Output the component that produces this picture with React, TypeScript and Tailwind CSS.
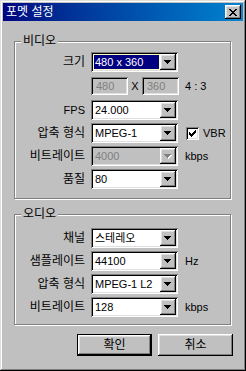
import type { ReactNode } from 'react';

const raised =
  'shadow-[inset_-1px_-1px_#000,inset_1px_1px_#fff,inset_-2px_-2px_#808080,inset_2px_2px_#dfdfdf]';
const sunken =
  'shadow-[inset_1px_1px_#808080,inset_-1px_-1px_#fff,inset_2px_2px_#000,inset_-2px_-2px_#dfdfdf]';

function Arrow({ disabled }: { disabled?: boolean }) {
  return (
    <svg width="8" height="5" viewBox="0 0 8 5" className="block">
      {disabled && <path d="M1 1h7v1H1zM2 2h5v1H2zM3 3h3v1H3zM4 4h1v1H4z" fill="#fff" />}
      <path d="M0 0h7v1H0zM1 1h5v1H1zM2 2h3v1H2zM3 3h1v1H3z" fill={disabled ? '#808080' : '#000'} />
    </svg>
  );
}

function Combo({ value, selected, disabled }: { value: string; selected?: boolean; disabled?: boolean }) {
  return (
    <div
      className={`flex h-[20px] w-[87px] items-center p-[2px] text-[11px] ${sunken} ${disabled ? 'bg-[#c0c0c0]' : 'bg-white'}`}
    >
      <div className="flex h-full flex-1 items-center overflow-hidden pl-[1px] pr-[1px]">
        {selected ? (
          <span className="flex h-[14px] w-full items-center bg-[#000080] pl-[1px] text-white outline outline-1 outline-dotted outline-[#ffff90]">
            {value}
          </span>
        ) : (
          <span className={`whitespace-nowrap pl-[1px] ${disabled ? 'text-[#808080]' : 'text-black'}`}>{value}</span>
        )}
      </div>
      <div className={`flex h-[16px] w-[16px] shrink-0 items-center justify-center bg-[#c0c0c0] ${raised}`}>
        <Arrow disabled={disabled} />
      </div>
    </div>
  );
}

function Row({ label, children, className = '' }: { label: string; children: ReactNode; className?: string }) {
  return (
    <div className={`flex h-[20px] items-center ${className}`}>
      <div className="w-[70px] text-right">{label}</div>
      <div className="ml-[6px] flex items-center">{children}</div>
    </div>
  );
}

function Group({ title, className, children }: { title: string; className: string; children: ReactNode }) {
  return (
    <div
      className={`relative w-[217px] border border-[#808080] shadow-[1px_1px_0_#fff,inset_1px_1px_0_#fff] ${className}`}
    >
      <span className="absolute -top-[8px] left-[6px] bg-[#c0c0c0] px-[2px] leading-[14px]">{title}</span>
      {children}
    </div>
  );
}

export default function App() {
  return (
    <div className="h-[371px] w-[246px] bg-[#c0c0c0] p-[3px] font-['Liberation_Sans','Noto_Sans_CJK_KR',sans-serif] text-[12px] leading-none text-black shadow-[inset_-1px_-1px_#000,inset_1px_1px_#dfdfdf,inset_-2px_-2px_#808080,inset_2px_2px_#fff]">
      <div className="flex h-[18px] items-center justify-between bg-gradient-to-r from-[#000080] to-[#1084d0] pl-[3px] pr-[2px]">
        <span className="text-white">포멧 설정</span>
        <div className={`flex h-[14px] w-[16px] items-center justify-center bg-[#c0c0c0] ${raised}`}>
          <svg width="8" height="7" viewBox="0 0 8 7" className="block">
            <path
              d="M0 0h2v1h1v1h2V1h1V0h2v1H7v1H6v1H5v1h1v1h1v1h1v1H6V6H5V5H3v1H2v1H0V6h1V5h1V4h1V3H2V2H1V1H0z"
              fill="#000"
            />
          </svg>
        </div>
      </div>

      <div className="pl-[11px]">
        <Group title="비디오" className="mt-[20px] h-[158px] pt-[10px]">
          <Row label="크기">
            <Combo value="480 x 360" selected />
          </Row>
          <div className="mt-[5px] flex h-[18px] items-center pl-[76px] text-[11px]">
            <div className={`flex h-[18px] w-[37px] items-center bg-[#c0c0c0] pl-[5px] text-[#808080] ${sunken}`}>480</div>
            <div className="w-[14px] text-center">X</div>
            <div className={`flex h-[18px] w-[37px] items-center bg-[#c0c0c0] pl-[5px] text-[#808080] ${sunken}`}>360</div>
            <span className="ml-[6px]">4 : 3</span>
          </div>
          <Row label="FPS" className="mt-[5px] text-[11px]">
            <Combo value="24.000" />
          </Row>
          <Row label="압축 형식" className="mt-[3px]">
            <Combo value="MPEG-1" />
            <div className={`ml-[8px] flex h-[13px] w-[13px] items-center justify-center bg-white ${sunken}`}>
              <svg width="7" height="7" viewBox="0 0 7 7" className="block">
                <path d="M6 0h1v3H6v1H5v1H4v1H3v1H2V6H1V5H0V2h1v1h1v1h1V3h1V2h1V1h1z" fill="#000" />
              </svg>
            </div>
            <span className="ml-[4px] text-[11px]">VBR</span>
          </Row>
          <Row label="비트레이트" className="mt-[3px]">
            <Combo value="4000" disabled />
            <span className="ml-[7px] text-[11px]">kbps</span>
          </Row>
          <Row label="품질" className="mt-[3px]">
            <Combo value="80" />
          </Row>
        </Group>

        <Group title="오디오" className="mt-[15px] h-[111px] pt-[13px]">
          <Row label="채널">
            <Combo value="스테레오" />
          </Row>
          <Row label="샘플레이트" className="mt-[3px]">
            <Combo value="44100" />
            <span className="ml-[7px] text-[11px]">Hz</span>
          </Row>
          <Row label="압축 형식" className="mt-[3px]">
            <Combo value="MPEG-1 L2" />
          </Row>
          <Row label="비트레이트" className="mt-[3px]">
            <Combo value="128" />
            <span className="ml-[7px] text-[11px]">kbps</span>
          </Row>
        </Group>

        <div className="mt-[9px] flex gap-[6px] pl-[63px]">
          <button className="flex h-[22px] w-[75px] items-center justify-center bg-[#c0c0c0] shadow-[inset_0_0_0_1px_#000,inset_-2px_-2px_#000,inset_2px_2px_#fff,inset_-3px_-3px_#808080,inset_3px_3px_#dfdfdf]">
            확인
          </button>
          <button className={`flex h-[22px] w-[75px] items-center justify-center bg-[#c0c0c0] ${raised}`}>취소</button>
        </div>
      </div>
    </div>
  );
}
